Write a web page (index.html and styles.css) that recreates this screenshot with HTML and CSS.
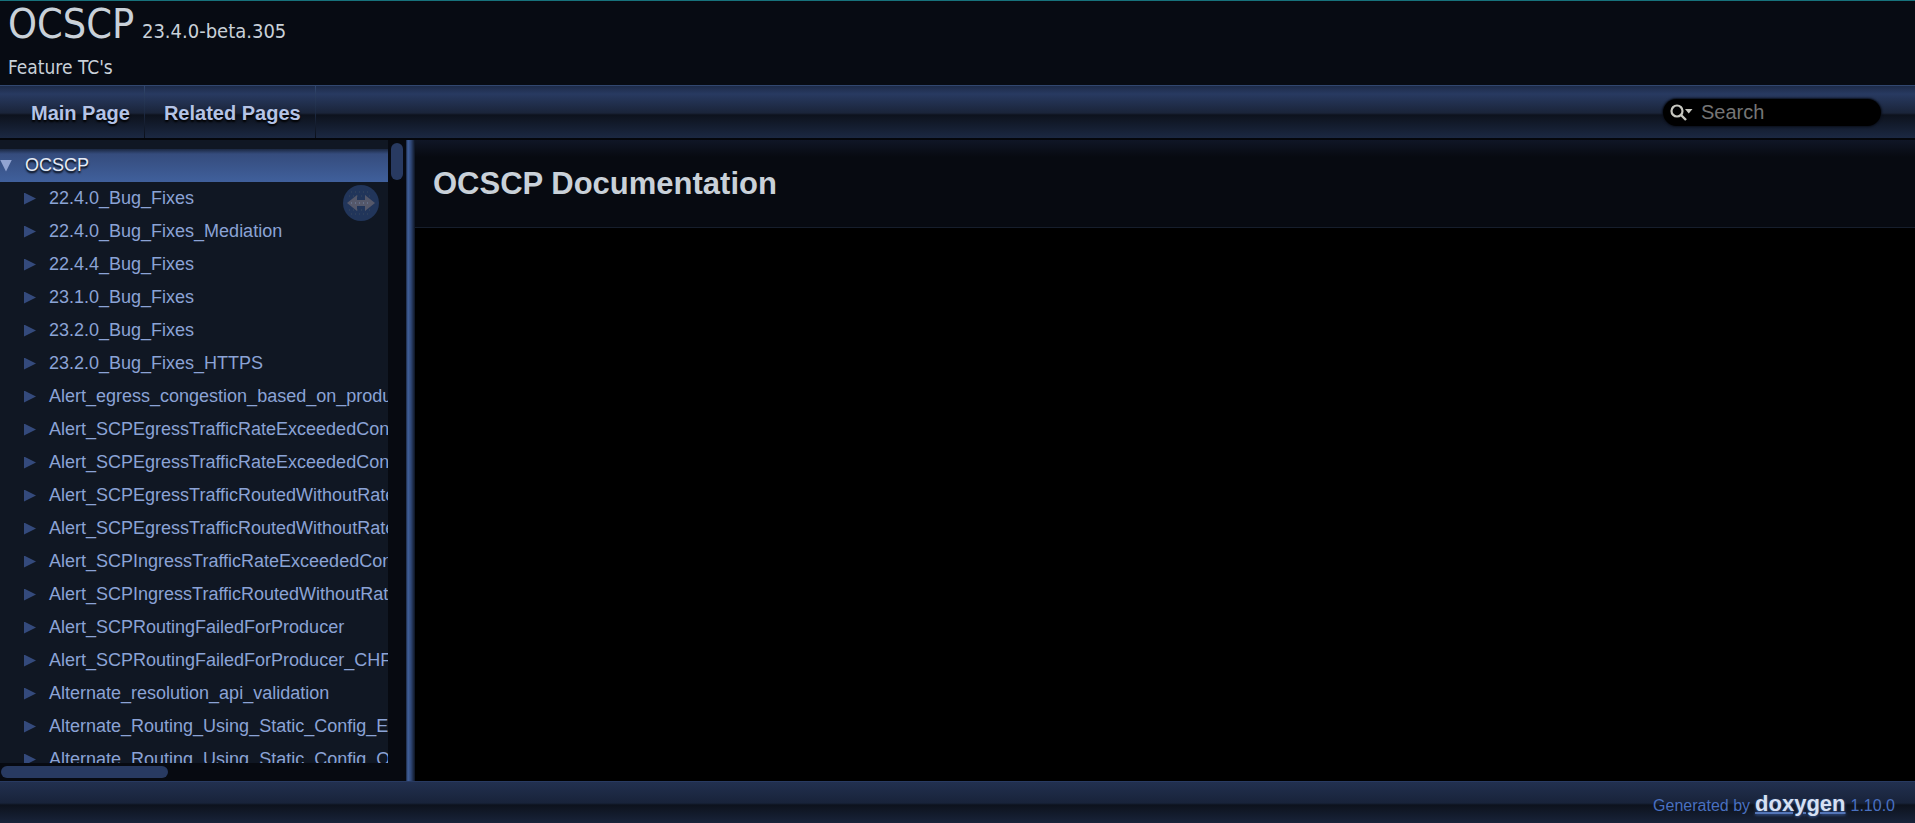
FILE: index.html
```html
<!DOCTYPE html>
<html lang="en">
<head>
<meta charset="utf-8">
<title>OCSCP: OCSCP Documentation</title>
<link rel="stylesheet" href="styles.css">
</head>
<body>
<header class="title-area">
  <div class="project-name">OCSCP<span class="project-number"> 23.4.0-beta.305</span></div>
  <div class="project-brief">Feature TC's</div>
</header>
<nav class="main-nav">
  <ul class="menu">
    <li><a href="#main">Main Page</a></li>
    <li><a href="#pages">Related Pages</a></li>
  </ul>
  <form class="search-box" role="search">
    <svg class="search-icon" viewBox="0 0 23 17" aria-hidden="true">
      <circle cx="7" cy="7" r="5.500" fill="none" stroke="#c8c8c0" stroke-width="2.200"/>
      <path d="M11 11l5 5" stroke="#c8c8c0" stroke-width="2.400"/>
      <path d="M15 5h7.500l-3.750 4.500z" fill="#c8c8c0"/>
    </svg>
    <input type="text" placeholder="Search" aria-label="Search">
  </form>
</nav>
<div class="workspace">
  <aside class="side-nav">
    <div class="tree-view">
      <ul class="tree">
        <li class="selected"><span class="arrow"></span><a href="#main">OCSCP</a></li>
        <li><span class="arrow"></span><a href="#p1">22.4.0_Bug_Fixes</a></li>
        <li><span class="arrow"></span><a href="#p2">22.4.0_Bug_Fixes_Mediation</a></li>
        <li><span class="arrow"></span><a href="#p3">22.4.4_Bug_Fixes</a></li>
        <li><span class="arrow"></span><a href="#p4">23.1.0_Bug_Fixes</a></li>
        <li><span class="arrow"></span><a href="#p5">23.2.0_Bug_Fixes</a></li>
        <li><span class="arrow"></span><a href="#p6">23.2.0_Bug_Fixes_HTTPS</a></li>
        <li><span class="arrow"></span><a href="#p7">Alert_egress_congestion_based_on_produ</a></li>
        <li><span class="arrow"></span><a href="#p8">Alert_SCPEgressTrafficRateExceededCon</a></li>
        <li><span class="arrow"></span><a href="#p9">Alert_SCPEgressTrafficRateExceededCon</a></li>
        <li><span class="arrow"></span><a href="#p10">Alert_SCPEgressTrafficRoutedWithoutRate</a></li>
        <li><span class="arrow"></span><a href="#p11">Alert_SCPEgressTrafficRoutedWithoutRate</a></li>
        <li><span class="arrow"></span><a href="#p12">Alert_SCPIngressTrafficRateExceededCon</a></li>
        <li><span class="arrow"></span><a href="#p13">Alert_SCPIngressTrafficRoutedWithoutRat</a></li>
        <li><span class="arrow"></span><a href="#p14">Alert_SCPRoutingFailedForProducer</a></li>
        <li><span class="arrow"></span><a href="#p15">Alert_SCPRoutingFailedForProducer_CHF</a></li>
        <li><span class="arrow"></span><a href="#p16">Alternate_resolution_api_validation</a></li>
        <li><span class="arrow"></span><a href="#p17">Alternate_Routing_Using_Static_Config_E</a></li>
        <li><span class="arrow"></span><a href="#p18">Alternate_Routing_Using_Static_Config_O</a></li>
      </ul>
      <button class="sync" type="button" aria-label="Sync panel">
        <svg viewBox="0 0 36 36" aria-hidden="true">
          <circle cx="18" cy="18" r="18" fill="#21355a"/>
          <path d="M8 7h20M6 11h24M6 25h24M8 29h20" stroke="#3b4a5e" stroke-dasharray="1 3"/>
          <path d="M4 18l10-8v5h8v-5l10 8-10 8v-5h-8v5z" fill="#55586a"/>
          <path d="M8 18h20" stroke="#7484a6" stroke-dasharray="1 3"/>
        </svg>
      </button>
    </div>
    <div class="track-v"><div class="thumb-v"></div></div>
    <div class="track-h"><div class="thumb-h"></div></div>
  </aside>
  <div class="splitter"></div>
  <main class="content">
    <div class="page-header"><h1>OCSCP Documentation</h1></div>
  </main>
</div>
<footer class="page-footer">
  <span>Generated by</span>
  <a class="doxygen" href="#doxygen">doxygen</a>
  <span>1.10.0</span>
</footer>
</body>
</html>
```
FILE: styles.css
```css
* { box-sizing: border-box; }
body {
  margin: 0;
  height: 100vh;
  display: flex;
  flex-direction: column;
  overflow: hidden;
  background: #000;
  color: #c9d1d9;
  font-family: "Liberation Sans", Arial, sans-serif;
}
ul { list-style: none; margin: 0; padding: 0; }
a { text-decoration: none; color: inherit; }

.title-area {
  height: 85px;
  flex: none;
  padding: 0 8px;
  border-top: 1px solid #17727c;
  background: #070b13;
  font-family: "DejaVu Sans Condensed", Tahoma, sans-serif;
}
.project-name { font-size: 41px; line-height: 46px; }
.project-number { margin-left: 2px; font-size: 20px; }
.project-brief { font-size: 19px; line-height: 26px; }

.main-nav {
  height: 55px;
  flex: none;
  display: flex;
  justify-content: space-between;
  align-items: center;
  padding: 0 34px 0 16px;
  border-top: 1px solid #31476f;
  border-bottom: 2px solid #04060b;
  background: linear-gradient(#1d2b49 0, #283a61 8px, #1a2439 27px, #0d121d 29px, #101725 34px, #1b2842 100%);
}
.menu { display: flex; align-self: stretch; }
.menu li { display: flex; border-right: 1px solid; border-image: linear-gradient(#31476f, #0a0e17) 1; }
.menu a {
  padding: 0 14px 0 19px;
  font-size: 20px;
  font-weight: bold;
  line-height: 54px;
  color: #b4c3e6;
  text-shadow: 0 2px 2px #000;
}
.menu li:first-child a { padding-left: 15px; }
.search-box {
  width: 218px;
  height: 27px;
  display: flex;
  align-items: center;
  gap: 8px;
  padding: 0 7px;
  border-radius: 14px;
  background: #000;
  box-shadow: 0 0 2px 1px #0a0f1a;
}
.search-icon { width: 23px; height: 17px; flex: none; }
.search-box input {
  min-width: 0;
  flex: 1;
  padding: 0;
  border: 0;
  outline: 0;
  background: none;
  color: #c9d1d9;
  font: 20px "Liberation Sans", Arial, sans-serif;
}
.search-box input::placeholder { color: #757575; opacity: 1; }

.workspace { flex: 1; min-height: 0; display: flex; }
.side-nav {
  width: 406px;
  flex: none;
  display: grid;
  grid-template: minmax(0, 1fr) 18px / minmax(0, 1fr) 18px;
  background: #070a11;
}
.tree-view { position: relative; overflow: hidden; padding-top: 9px; background: #101723; }
.tree li {
  height: 33px;
  display: flex;
  align-items: center;
  padding-left: 24px;
  white-space: nowrap;
  font-size: 18px;
  color: #8ba3d6;
}
.tree .selected {
  padding-left: 0;
  color: #e6ebf5;
  text-shadow: 0 2px 2px #000;
  background: linear-gradient(#1b2842, #354c7d 5px, #40609c);
}
.arrow {
  width: 12px;
  height: 12px;
  margin-right: 13px;
  flex: none;
  background: #344a7c;
  clip-path: polygon(0 0, 100% 50%, 0 100%);
}
.selected .arrow { background: #91a4d2; clip-path: polygon(0 0, 100% 0, 50% 100%); }
.sync {
  position: absolute;
  top: 45px;
  right: 9px;
  width: 36px;
  height: 36px;
  padding: 0;
  border: 0;
  background: none;
}
.sync svg { display: block; }
.track-v { padding: 3px; }
.thumb-v { width: 12px; height: 37px; border-radius: 6px; background: #283a61; }
.track-h { grid-column: 1 / -1; padding: 3px 1px; }
.thumb-h { width: 167px; height: 12px; border-radius: 6px; background: #283a61; }
.splitter { width: 9px; flex: none; background: linear-gradient(90deg, #1b2842, #40609c 2px, #2f4674 5px, #0d1422); }
.content { flex: 1; min-width: 0; }
.page-header {
  border-bottom: 1px solid #161e2c;
  padding: 0 18px;
  background: linear-gradient(#101626, #070a11 17px);
}
h1 { margin: 0; font-size: 31px; line-height: 87px; }

.page-footer {
  height: 42px;
  flex: none;
  display: flex;
  justify-content: flex-end;
  align-items: baseline;
  gap: 5px;
  padding-right: 20px;
  border-top: 1px solid #283a61;
  background: linear-gradient(#22304f 0, #18233a 21px, #0d121d 23px, #101725 28px, #18233a 100%);
  color: #4970c0;
  font-size: 16px;
  line-height: 43px;
}
.doxygen {
  font-size: 22px;
  font-weight: bold;
  color: #d6e0f3;
  text-decoration: underline #5476b8 2px;
  text-shadow: 0 1px 3px #3c5c9c;
}
```
